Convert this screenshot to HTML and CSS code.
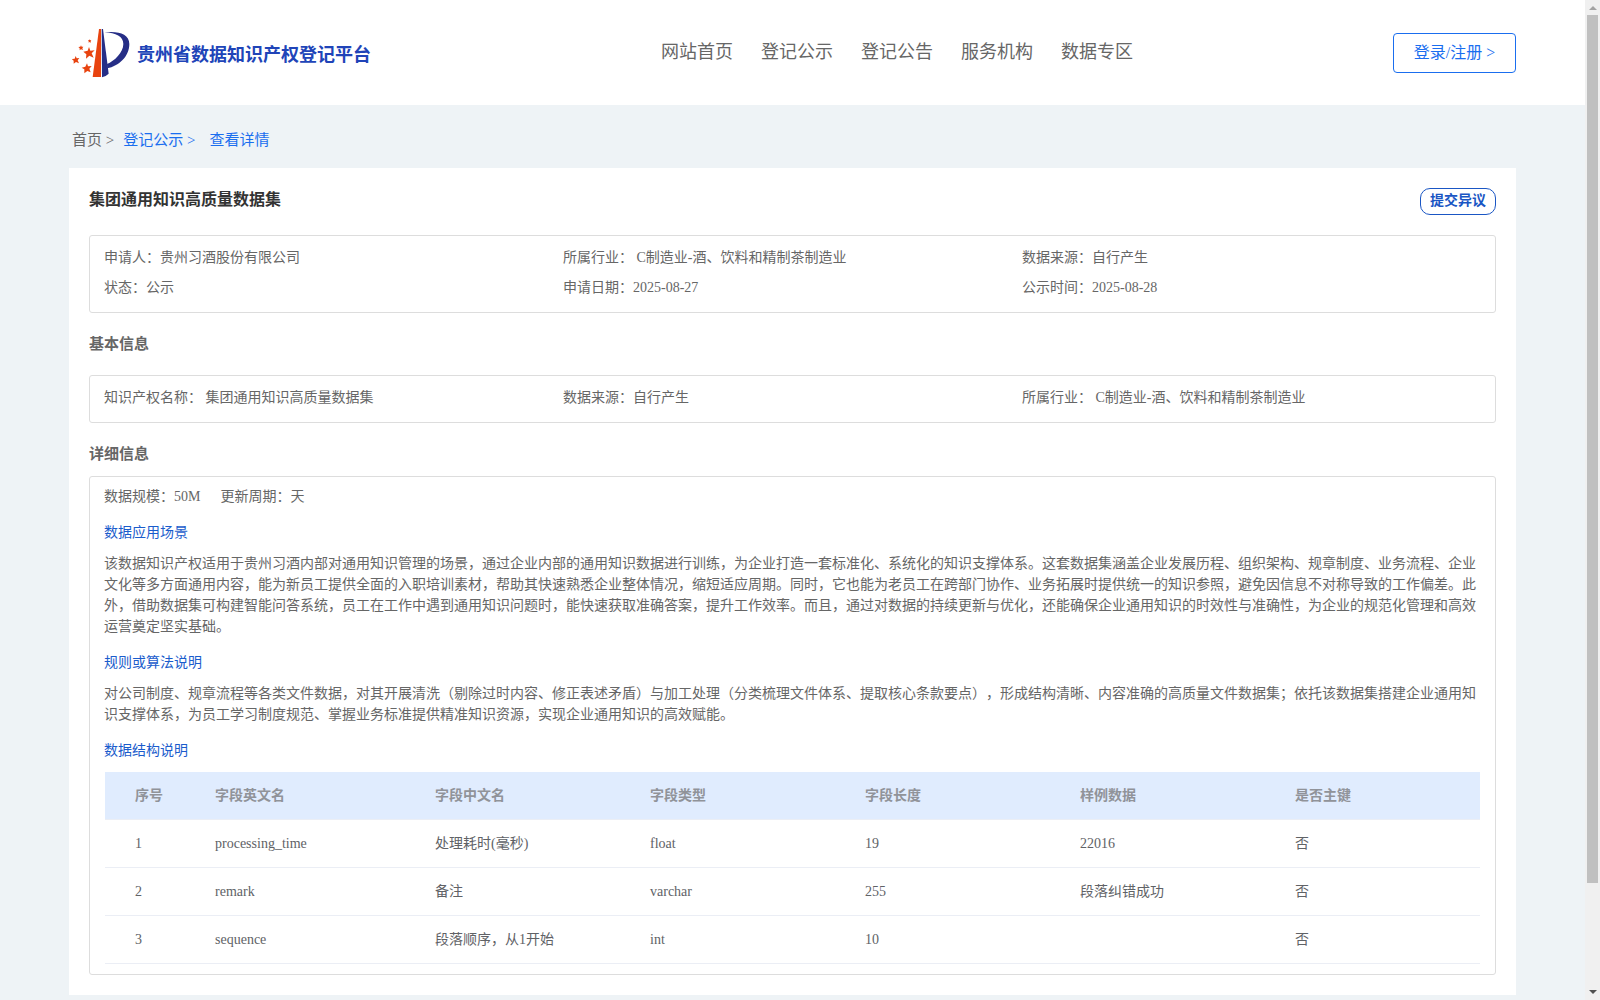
FILE: index.html
```
<!DOCTYPE html>
<html lang="zh-CN">
<head>
  <meta charset="UTF-8" />
  <meta name="viewport" content="width=device-width, initial-scale=1.0"/>
  <title>贵州省数据知识产权登记平台</title>
  <link rel="stylesheet" href="styles.css">
</head>
<body>
  <div class="page">

    <!-- Header -->
    <header class="site-header">
      <a class="logo" href="#">
        <svg width="60" height="52" viewBox="18 24 180 156">
          <path fill="#e8430f" d="M99 27h6v144H80z"/>
          <path fill="#262e86" d="M107 27h4l17 134q-8 8-20 11z"/>
          <path fill="#262e86" d="M115 37C155 32 190 40 190 72c0 38-32 66-66 73l-1-13c22-9 49-34 49-60 0-22-22-34-57-35z"/>
          <g fill="#e8430f">
            <path d="M69 81l4 11 13-1-9 9 6 13-13-6-10 9 1-13-9-8 13-3z"/>
            <path d="M63 130l3 9 11-1-7 8 4 11-10-4-9 7v-12l-8-5 11-3z"/>
            <path d="M29 108l3 7 8-1-5 7 4 9-9-4-7 5v-9l-6-5 9-1z"/>
            <path d="M45 76l2 4 5 0-3 5 2 5-6-2-4 3v-6l-4-4 6-1z"/>
            <path d="M71 58l2 3 3 0-2 3 1 4-4-2-3 2v-4l-2-3 4-1z"/>
          </g>
        </svg>
        <span>贵州省数据知识产权登记平台</span>
      </a>
      <nav>
        <ul>
          <li><a href="#">网站首页</a></li>
          <li><a href="#">登记公示</a></li>
          <li><a href="#">登记公告</a></li>
          <li><a href="#">服务机构</a></li>
          <li><a href="#">数据专区</a></li>
        </ul>
      </nav>
      <a class="login-btn" href="#">登录/注册 &gt;</a>
    </header>

    <!-- Breadcrumb -->
    <div class="breadcrumb">
      <span>首页 &gt;</span>
      <a href="#">登记公示 &gt;</a>
      <a href="#">查看详情</a>
    </div>

    <!-- Detail card -->
    <main class="card">
      <div class="card-head">
        <h1>集团通用知识高质量数据集</h1>
        <button class="objection-btn">提交异议</button>
      </div>

      <div class="info-box">
        <div>申请人：贵州习酒股份有限公司</div>
        <div>所属行业： C制造业-酒、饮料和精制茶制造业</div>
        <div>数据来源：自行产生</div>
        <div>状态：公示</div>
        <div>申请日期：2025-08-27</div>
        <div>公示时间：2025-08-28</div>
      </div>

      <h2 class="basic-title">基本信息</h2>
      <div class="info-box">
        <div>知识产权名称： 集团通用知识高质量数据集</div>
        <div>数据来源：自行产生</div>
        <div>所属行业： C制造业-酒、饮料和精制茶制造业</div>
      </div>

      <h2 class="detail-title">详细信息</h2>
      <div class="detail-box">
        <div class="scale"><span>数据规模：50M</span><span>更新周期：天</span></div>

        <h3>数据应用场景</h3>
        <p>该数据知识产权适用于贵州习酒内部对通用知识管理的场景，通过企业内部的通用知识数据进行训练，为企业打造一套标准化、系统化的知识支撑体系。这套数据集涵盖企业发展历程、组织架构、规章制度、业务流程、企业文化等多方面通用内容，能为新员工提供全面的入职培训素材，帮助其快速熟悉企业整体情况，缩短适应周期。同时，它也能为老员工在跨部门协作、业务拓展时提供统一的知识参照，避免因信息不对称导致的工作偏差。此外，借助数据集可构建智能问答系统，员工在工作中遇到通用知识问题时，能快速获取准确答案，提升工作效率。而且，通过对数据的持续更新与优化，还能确保企业通用知识的时效性与准确性，为企业的规范化管理和高效运营奠定坚实基础。</p>

        <h3>规则或算法说明</h3>
        <p>对公司制度、规章流程等各类文件数据，对其开展清洗（剔除过时内容、修正表述矛盾）与加工处理（分类梳理文件体系、提取核心条款要点），形成结构清晰、内容准确的高质量文件数据集；依托该数据集搭建企业通用知识支撑体系，为员工学习制度规范、掌握业务标准提供精准知识资源，实现企业通用知识的高效赋能。</p>

        <h3>数据结构说明</h3>
        <table>
          <colgroup><col class="col-index"><col class="col-en"><col><col><col><col><col class="col-key"></colgroup>
          <thead>
            <tr><th>序号</th><th>字段英文名</th><th>字段中文名</th><th>字段类型</th><th>字段长度</th><th>样例数据</th><th>是否主键</th></tr>
          </thead>
          <tbody>
            <tr><td>1</td><td>processing_time</td><td>处理耗时(毫秒)</td><td>float</td><td>19</td><td>22016</td><td>否</td></tr>
            <tr><td>2</td><td>remark</td><td>备注</td><td>varchar</td><td>255</td><td>段落纠错成功</td><td>否</td></tr>
            <tr><td>3</td><td>sequence</td><td>段落顺序，从1开始</td><td>int</td><td>10</td><td></td><td>否</td></tr>
          </tbody>
        </table>
      </div>
    </main>
  </div>

  <!-- Scrollbar -->
  <div class="scrollbar">
    <i class="arrow-up"></i>
    <div class="thumb"></div>
    <i class="arrow-down"></i>
  </div>
</body>
</html>
```
FILE: styles.css
```
/* Reset & Base */
* { margin: 0; padding: 0; box-sizing: border-box; }
body {
  display: flex;
  height: 1000px;
  overflow: hidden;
  font-family: "Liberation Serif", "Noto Sans CJK SC", serif;
  font-size: 14px;
  color: #666;
  background: #eef3f6;
  text-spacing-trim: space-all;
}
a { text-decoration: none; color: inherit; }
ul { list-style: none; }
.page { width: 1585px; }

/* Header */
.site-header {
  display: grid;
  grid-template-columns: 589px 1fr auto;
  align-items: start;
  height: 105px;
  padding: 0 69px 0 72px;
  background: #fff;
}
.logo {
  display: flex;
  align-items: flex-start;
  gap: 5px;
  padding-top: 28px;
  font-size: 18px;
  font-weight: bold;
  line-height: 54px;
  color: #2044b8;
}
.logo svg { display: block; }
.site-header ul { display: flex; gap: 28px; padding-top: 37px; }
.site-header li { font-size: 18px; line-height: 30px; white-space: nowrap; }
.login-btn {
  width: 123px;
  height: 40px;
  margin-top: 33px;
  border: 1px solid #1a6eef;
  border-radius: 4px;
  font-size: 16px;
  line-height: 38px;
  text-align: center;
  color: #1a6eef;
}

/* Breadcrumb */
.breadcrumb {
  display: flex;
  height: 63px;
  padding-left: 72px;
  font-size: 15px;
  line-height: 70px;
}
.breadcrumb a { margin-left: 9px; color: #1a6eef; }
.breadcrumb a + a { margin-left: 14px; }

/* Card */
.card {
  width: 1447px;
  height: 827px;
  margin-left: 69px;
  padding: 20px;
  background: #fff;
}
.card-head { display: flex; justify-content: space-between; height: 47px; }
.card-head h1 { font-size: 16px; line-height: 24px; color: #333; }
.objection-btn {
  width: 76px;
  height: 27px;
  padding-bottom: 2px;
  border: 1px solid #1a56c4;
  border-radius: 10px;
  background: #fff;
  font-family: inherit;
  font-size: 14px;
  font-weight: bold;
  line-height: 23px;
  color: #1a56c4;
}
.info-box {
  display: grid;
  grid-template-columns: repeat(3, 1fr);
  padding: 7px 14px 9px;
  border: 1px solid #ddd;
  border-radius: 3px;
  line-height: 30px;
}
h2 { font-size: 15px; line-height: 22px; }
.basic-title { padding: 20px 0; }
.detail-title { padding: 20px 0 11px; }

.detail-box {
  height: 499px;
  padding: 9px 15px 0 14px;
  border: 1px solid #ddd;
  border-radius: 3px;
}
.scale { display: flex; gap: 20px; line-height: 21px; }
h3 {
  margin: 15px 0 10px;
  font-size: 14px;
  font-weight: normal;
  line-height: 21px;
  color: #1a5ccc;
}
.detail-box p { line-height: 21px; }

/* Field table */
table {
  width: 1375px;
  margin: 11px 0 0 1px;
  table-layout: fixed;
  border-spacing: 0;
}
.col-index { width: 100px; }
.col-en { width: 220px; }
.col-key { width: 195px; }
th, td {
  height: 48px;
  padding: 0 10px;
  border-bottom: 1px solid #ebeef5;
  text-align: left;
  line-height: 23px;
}
th { padding-bottom: 1px; background: #e0ecfe; color: #909399; }
td { color: #606266; }
th:first-child, td:first-child { padding-left: 30px; }

/* Scrollbar */
.scrollbar {
  display: flex;
  flex-direction: column;
  align-items: center;
  width: 15px;
  height: 1000px;
  padding: 6px 0;
  background: #f0f0f0;
}
.thumb { width: 11px; height: 868px; margin-top: 5px; background: #c0c0c0; }
.arrow-up, .arrow-down { border: 4px solid transparent; }
.arrow-up { border-top: 0; border-bottom-color: #a3a3a3; }
.arrow-down { margin-top: auto; border-bottom: 0; border-top-color: #505050; }
```
